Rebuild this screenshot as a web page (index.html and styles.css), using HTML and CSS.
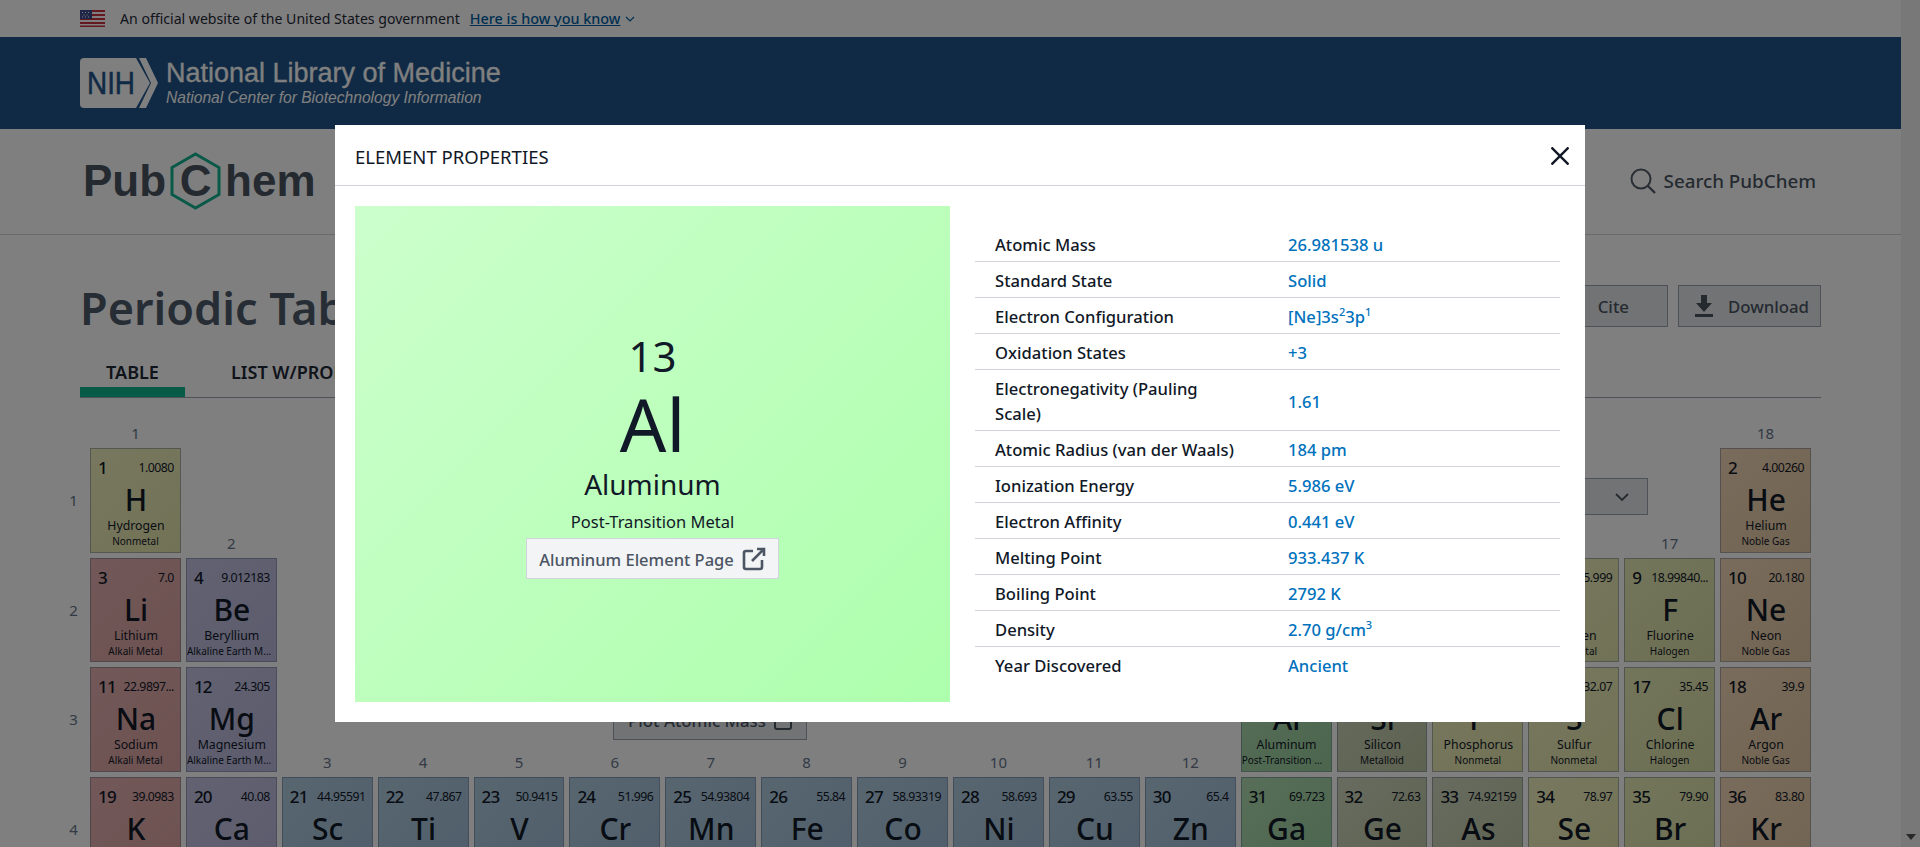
FILE: index.html
```html
<!DOCTYPE html>
<html lang="en">
<head>
    <meta charset="UTF-8">
    <meta name="viewport" content="width=device-width, initial-scale=1.0">
    <title>Periodic Table - PubChem</title>
    <link rel="stylesheet" href="styles.css">
</head>
<body>
    <div class="page">
        <div class="gov-banner">
            <svg class="flag" viewBox="0 0 25 17" width="25" height="17">
                <rect width="25" height="17" fill="#fff"/>
                <path d="M0 0H25V2H0ZM0 4H25V6H0ZM0 8H25V10H0ZM0 12H25V14H0ZM0 15.5H25V17H0Z" fill="#c8313e"/>
                <rect width="12" height="9" fill="#3c4a8c"/>
                <path d="M2 2h1v1H2ZM5 2h1v1H5ZM8 2h1v1H8ZM3.500 4.500h1v1h-1ZM6.500 4.500h1v1h-1ZM2 6.500h1v1H2ZM5 6.500h1v1H5ZM8 6.500h1v1H8Z" fill="#fff"/>
            </svg>
            <span>An official website of the United States government</span>
            <a class="how-link">Here is how you know</a>
            <svg class="how-chevron" viewBox="0 0 10 6" width="10" height="6"><path d="M1 1l4 4 4-4" fill="none" stroke="#005ea2" stroke-width="1.200"/></svg>
        </div>

        <div class="nlm-header">
            <div class="nih-logo">
                <svg viewBox="0 0 78 50" width="78" height="50">
                    <path d="M4 0H56L70 25L56 50H4Q0 50 0 46V4Q0 0 4 0Z" fill="#fff"/>
                    <path d="M59 0H66L78 25L66 50H59L71 25Z" fill="#fff"/>
                    <text class="nih-text" x="7" y="36" textLength="48" lengthAdjust="spacingAndGlyphs">NIH</text>
                </svg>
            </div>
            <div>
                <div class="nlm-title">National Library of Medicine</div>
                <div class="nlm-sub">National Center for Biotechnology Information</div>
            </div>
        </div>

        <div class="site-header">
            <div class="pubchem-logo">
                <span>Pub</span>
                <span class="hex">
                    <svg viewBox="0 0 51 58" width="51" height="58"><path d="M25.500 2L49 15.500V42.500L25.500 56L2 42.500V15.500Z" fill="none" stroke="#10b28e" stroke-width="3"/></svg>
                    <span class="hex-c">C</span>
                </span>
                <span>hem</span>
            </div>
            <div class="search">
                <svg viewBox="0 0 26 26" width="26" height="26"><circle cx="11" cy="11" r="9.500" fill="none" stroke="#555e6b" stroke-width="2"/><path d="M18 18l7 7" stroke="#555e6b" stroke-width="2.400"/></svg>
                <span>Search PubChem</span>
            </div>
        </div>

        <div class="content">
            <div class="title-row">
                <h1>Periodic Table of Elements</h1>
                <div class="actions">
                    <button class="btn btn-cite">
                        <svg viewBox="0 0 20 20" width="20" height="20"><path d="M3 4h5v6c0 3-2 5-4 6M12 4h5v6c0 3-2 5-4 6" fill="none" stroke="#4b5563" stroke-width="2"/></svg>
                        Cite
                    </button>
                    <button class="btn">
                        <svg viewBox="0 0 18 22" width="18" height="22"><path d="M6 0h6v8h5l-8 9-8-9h5ZM0 19h18v3H0Z" fill="#4b5563"/></svg>
                        Download
                    </button>
                </div>
            </div>

            <div class="tabs">
                <div class="tab active">TABLE</div>
                <div class="tab">LIST W/PROPERTIES</div>
                <div class="tab">PROPERTIES</div>
            </div>

            <div class="table-wrap">
                <div class="filter-row">
                    <div class="select">
                        <svg viewBox="0 0 14 8" width="14" height="8"><path d="M1 1l6 6 6-6" fill="none" stroke="#4b5563" stroke-width="1.800"/></svg>
                    </div>
                </div>
                <div class="plot-btn">
                    Plot Atomic Mass
                    <svg viewBox="0 0 18 18" width="18" height="18"><rect x="1" y="1" width="16" height="16" rx="2" fill="none" stroke="#4b5563" stroke-width="2"/></svg>
                </div>

                <div class="ptable">
                    <div class="period">1</div>
                    <div class="cell nonmetal"><span class="group">1</span><div class="top"><span class="num">1</span><span class="mass">1.0080</span></div><div class="sym">H</div><div class="name">Hydrogen</div><div class="cat">Nonmetal</div></div>
                    <div class="skip-16"></div>
                    <div class="cell noble"><span class="group">18</span><div class="top"><span class="num">2</span><span class="mass">4.00260</span></div><div class="sym">He</div><div class="name">Helium</div><div class="cat">Noble Gas</div></div>

                    <div class="period">2</div>
                    <div class="cell alkali"><div class="top"><span class="num">3</span><span class="mass">7.0</span></div><div class="sym">Li</div><div class="name">Lithium</div><div class="cat">Alkali Metal</div></div>
                    <div class="cell earth"><span class="group">2</span><div class="top"><span class="num">4</span><span class="mass">9.012183</span></div><div class="sym">Be</div><div class="name">Beryllium</div><div class="cat">Alkaline Earth Metal</div></div>
                    <div class="skip-10"></div>
                    <div class="cell metalloid"><span class="group">13</span><div class="top"><span class="num">5</span><span class="mass">10.81</span></div><div class="sym">B</div><div class="name">Boron</div><div class="cat">Metalloid</div></div>
                    <div class="cell nonmetal"><span class="group">14</span><div class="top"><span class="num">6</span><span class="mass">12.011</span></div><div class="sym">C</div><div class="name">Carbon</div><div class="cat">Nonmetal</div></div>
                    <div class="cell nonmetal"><span class="group">15</span><div class="top"><span class="num">7</span><span class="mass">14.007</span></div><div class="sym">N</div><div class="name">Nitrogen</div><div class="cat">Nonmetal</div></div>
                    <div class="cell nonmetal"><span class="group">16</span><div class="top"><span class="num">8</span><span class="mass">15.999</span></div><div class="sym">O</div><div class="name">Oxygen</div><div class="cat">Nonmetal</div></div>
                    <div class="cell halogen"><span class="group">17</span><div class="top"><span class="num">9</span><span class="mass">18.99840...</span></div><div class="sym">F</div><div class="name">Fluorine</div><div class="cat">Halogen</div></div>
                    <div class="cell noble"><div class="top"><span class="num">10</span><span class="mass">20.180</span></div><div class="sym">Ne</div><div class="name">Neon</div><div class="cat">Noble Gas</div></div>

                    <div class="period">3</div>
                    <div class="cell alkali"><div class="top"><span class="num">11</span><span class="mass">22.9897...</span></div><div class="sym">Na</div><div class="name">Sodium</div><div class="cat">Alkali Metal</div></div>
                    <div class="cell earth"><div class="top"><span class="num">12</span><span class="mass">24.305</span></div><div class="sym">Mg</div><div class="name">Magnesium</div><div class="cat">Alkaline Earth Metal</div></div>
                    <div class="skip-10"></div>
                    <div class="cell post"><div class="top"><span class="num">13</span><span class="mass">26.9815...</span></div><div class="sym">Al</div><div class="name">Aluminum</div><div class="cat">Post-Transition Metal</div></div>
                    <div class="cell metalloid"><div class="top"><span class="num">14</span><span class="mass">28.085</span></div><div class="sym">Si</div><div class="name">Silicon</div><div class="cat">Metalloid</div></div>
                    <div class="cell nonmetal"><div class="top"><span class="num">15</span><span class="mass">30.9737...</span></div><div class="sym">P</div><div class="name">Phosphorus</div><div class="cat">Nonmetal</div></div>
                    <div class="cell nonmetal"><div class="top"><span class="num">16</span><span class="mass">32.07</span></div><div class="sym">S</div><div class="name">Sulfur</div><div class="cat">Nonmetal</div></div>
                    <div class="cell halogen"><div class="top"><span class="num">17</span><span class="mass">35.45</span></div><div class="sym">Cl</div><div class="name">Chlorine</div><div class="cat">Halogen</div></div>
                    <div class="cell noble"><div class="top"><span class="num">18</span><span class="mass">39.9</span></div><div class="sym">Ar</div><div class="name">Argon</div><div class="cat">Noble Gas</div></div>

                    <div class="period">4</div>
                    <div class="cell alkali"><div class="top"><span class="num">19</span><span class="mass">39.0983</span></div><div class="sym">K</div><div class="name">Potassium</div><div class="cat">Alkali Metal</div></div>
                    <div class="cell earth"><div class="top"><span class="num">20</span><span class="mass">40.08</span></div><div class="sym">Ca</div><div class="name">Calcium</div><div class="cat">Alkaline Earth Metal</div></div>
                    <div class="cell transition"><span class="group">3</span><div class="top"><span class="num">21</span><span class="mass">44.95591</span></div><div class="sym">Sc</div><div class="name">Scandium</div><div class="cat">Transition Metal</div></div>
                    <div class="cell transition"><span class="group">4</span><div class="top"><span class="num">22</span><span class="mass">47.867</span></div><div class="sym">Ti</div><div class="name">Titanium</div><div class="cat">Transition Metal</div></div>
                    <div class="cell transition"><span class="group">5</span><div class="top"><span class="num">23</span><span class="mass">50.9415</span></div><div class="sym">V</div><div class="name">Vanadium</div><div class="cat">Transition Metal</div></div>
                    <div class="cell transition"><span class="group">6</span><div class="top"><span class="num">24</span><span class="mass">51.996</span></div><div class="sym">Cr</div><div class="name">Chromium</div><div class="cat">Transition Metal</div></div>
                    <div class="cell transition"><span class="group">7</span><div class="top"><span class="num">25</span><span class="mass">54.93804</span></div><div class="sym">Mn</div><div class="name">Manganese</div><div class="cat">Transition Metal</div></div>
                    <div class="cell transition"><span class="group">8</span><div class="top"><span class="num">26</span><span class="mass">55.84</span></div><div class="sym">Fe</div><div class="name">Iron</div><div class="cat">Transition Metal</div></div>
                    <div class="cell transition"><span class="group">9</span><div class="top"><span class="num">27</span><span class="mass">58.93319</span></div><div class="sym">Co</div><div class="name">Cobalt</div><div class="cat">Transition Metal</div></div>
                    <div class="cell transition"><span class="group">10</span><div class="top"><span class="num">28</span><span class="mass">58.693</span></div><div class="sym">Ni</div><div class="name">Nickel</div><div class="cat">Transition Metal</div></div>
                    <div class="cell transition"><span class="group">11</span><div class="top"><span class="num">29</span><span class="mass">63.55</span></div><div class="sym">Cu</div><div class="name">Copper</div><div class="cat">Transition Metal</div></div>
                    <div class="cell transition"><span class="group">12</span><div class="top"><span class="num">30</span><span class="mass">65.4</span></div><div class="sym">Zn</div><div class="name">Zinc</div><div class="cat">Transition Metal</div></div>
                    <div class="cell post"><div class="top"><span class="num">31</span><span class="mass">69.723</span></div><div class="sym">Ga</div><div class="name">Gallium</div><div class="cat">Post-Transition Metal</div></div>
                    <div class="cell metalloid"><div class="top"><span class="num">32</span><span class="mass">72.63</span></div><div class="sym">Ge</div><div class="name">Germanium</div><div class="cat">Metalloid</div></div>
                    <div class="cell metalloid"><div class="top"><span class="num">33</span><span class="mass">74.92159</span></div><div class="sym">As</div><div class="name">Arsenic</div><div class="cat">Metalloid</div></div>
                    <div class="cell nonmetal"><div class="top"><span class="num">34</span><span class="mass">78.97</span></div><div class="sym">Se</div><div class="name">Selenium</div><div class="cat">Nonmetal</div></div>
                    <div class="cell halogen"><div class="top"><span class="num">35</span><span class="mass">79.90</span></div><div class="sym">Br</div><div class="name">Bromine</div><div class="cat">Halogen</div></div>
                    <div class="cell noble"><div class="top"><span class="num">36</span><span class="mass">83.80</span></div><div class="sym">Kr</div><div class="name">Krypton</div><div class="cat">Noble Gas</div></div>
                </div>
            </div>
        </div>
    </div>

    <div class="scrollbar">
        <svg viewBox="0 0 10 6" width="10" height="6"><path d="M0 0h10L5 6Z" fill="#505050"/></svg>
    </div>

    <!-- Dimmed backdrop + element dialog -->
    <div class="overlay">
        <div class="modal">
            <div class="modal-header">
                <span>ELEMENT PROPERTIES</span>
                <svg class="close" viewBox="0 0 18 18" width="18" height="18"><path d="M0.500 0.500l17 17M17.500 0.500l-17 17" stroke="#111827" stroke-width="2.400"/></svg>
            </div>
            <div class="modal-body">
                <div class="element-card">
                    <div class="el-num">13</div>
                    <div class="el-sym">Al</div>
                    <div class="el-name">Aluminum</div>
                    <div class="el-cat">Post-Transition Metal</div>
                    <a class="el-link">
                        Aluminum Element Page
                        <svg viewBox="0 0 24 24" width="24" height="24"><path d="M11 4H4a2 2 0 0 0-2 2v14a2 2 0 0 0 2 2h14a2 2 0 0 0 2-2v-7M10 14L22 2M15 2h7v7" fill="none" stroke="#4b5563" stroke-width="2.600"/></svg>
                    </a>
                </div>
                <table class="props">
                    <tr><td>Atomic Mass</td><td>26.981538 u</td></tr>
                    <tr><td>Standard State</td><td>Solid</td></tr>
                    <tr><td>Electron Configuration</td><td>[Ne]3s<sup>2</sup>3p<sup>1</sup></td></tr>
                    <tr><td>Oxidation States</td><td>+3</td></tr>
                    <tr><td>Electronegativity (Pauling Scale)</td><td>1.61</td></tr>
                    <tr><td>Atomic Radius (van der Waals)</td><td>184 pm</td></tr>
                    <tr><td>Ionization Energy</td><td>5.986 eV</td></tr>
                    <tr><td>Electron Affinity</td><td>0.441 eV</td></tr>
                    <tr><td>Melting Point</td><td>933.437 K</td></tr>
                    <tr><td>Boiling Point</td><td>2792 K</td></tr>
                    <tr><td>Density</td><td>2.70 g/cm<sup>3</sup></td></tr>
                    <tr><td>Year Discovered</td><td>Ancient</td></tr>
                </table>
            </div>
        </div>
    </div>
</body>
</html>
```

FILE: styles.css
```css
* {
    box-sizing: border-box;
}
html, body {
    height: 847px;
    margin: 0;
    overflow: hidden;
}
body {
    font-family: "Noto Sans", sans-serif;
    color: #1f2937;
    background-color: #fff;
    display: flex;
}
.page {
    flex: 1;
    min-width: 0;
}
.scrollbar {
    width: 19px;
    background-color: #f1f1f1;
    display: flex;
    flex-direction: column;
    justify-content: flex-end;
    align-items: center;
    padding-bottom: 7px;
}

/* top bars */
.gov-banner {
    height: 37px;
    padding-left: 80px;
    display: flex;
    align-items: center;
    font-size: 14.100px;
    background-color: #fff;
}
.flag {
    margin-right: 15px;
}
.how-link {
    margin-left: 10px;
    font-size: 14.400px;
    font-weight: 500;
    color: #005ea2;
    text-decoration: underline;
}
.how-chevron {
    margin-left: 5px;
}
.nlm-header {
    height: 92px;
    padding-left: 80px;
    display: flex;
    align-items: center;
    gap: 8px;
    background-color: #20558a;
    color: #fff;
    font-family: "Liberation Sans", sans-serif;
}
.nih-logo svg {
    display: block;
}
.nih-text {
    font-family: "Liberation Sans", sans-serif;
    font-size: 31px;
    fill: #20558a;
    stroke: #20558a;
    stroke-width: 0.500px;
}
.nlm-title {
    font-size: 27px;
    line-height: 30px;
    -webkit-text-stroke: 0.300px #fff;
}
.nlm-sub {
    font-size: 15.600px;
    font-style: italic;
    line-height: 20px;
}
.site-header {
    height: 106px;
    padding: 0 85px 2px 83px;
    display: flex;
    justify-content: space-between;
    align-items: center;
    border-bottom: 1px solid #d1d5db;
}
.pubchem-logo {
    display: flex;
    align-items: center;
    gap: 4px;
    font-family: "Liberation Sans", sans-serif;
    font-weight: bold;
    font-size: 44px;
    color: #4b5563;
}
.hex {
    position: relative;
    width: 51px;
    height: 58px;
    display: flex;
    justify-content: center;
    align-items: center;
}
.hex svg {
    position: absolute;
    top: 0;
    left: 0;
}
.search {
    display: flex;
    align-items: center;
    gap: 8px;
    font-size: 18.800px;
    font-weight: 500;
    color: #4b5563;
}

/* page body */
.content {
    padding: 0 80px;
}
.title-row {
    height: 118px;
    padding-top: 42px;
    display: flex;
    justify-content: space-between;
}
.title-row h1 {
    margin: 0;
    font-size: 45px;
    font-weight: 600;
    line-height: 62px;
    color: #4f5b6b;
}
.actions {
    margin-top: 8px;
    display: flex;
    gap: 10px;
    height: 42px;
}
.btn {
    display: flex;
    align-items: center;
    gap: 15px;
    padding: 0 11px 0 16px;
    font-family: inherit;
    font-size: 16.800px;
    font-weight: 500;
    color: #4b5563;
    background-color: #e5e7eb;
    border: 1px solid #9ca3af;
}
.btn-cite {
    gap: 11px;
    padding-right: 38px;
}
.tabs {
    height: 45px;
    display: flex;
    border-bottom: 1px solid #9ca3af;
}
.tab {
    padding: 0 22px;
    height: 44px;
    line-height: 38px;
    font-size: 18px;
    font-weight: 600;
    color: #1f2937;
}
.tab.active {
    width: 105px;
    padding: 0;
    text-align: center;
    border-bottom: 10px solid #10b68e;
    margin-right: 24px;
}
.table-wrap {
    position: relative;
    padding-top: 50px;
}

/* these sit over the empty middle of the table */
.filter-row {
    position: absolute;
    top: 80px;
    right: 173px;
}
.select {
    width: 400px;
    height: 37px;
    padding-right: 18px;
    display: flex;
    justify-content: flex-end;
    align-items: center;
    background-color: #e5e7eb;
    border: 1px solid #9ca3af;
}
.plot-btn {
    position: absolute;
    top: 305px;
    left: 533px;
    width: 194px;
    height: 37px;
    padding-bottom: 2px;
    display: flex;
    justify-content: center;
    align-items: center;
    gap: 8px;
    font-size: 16.800px;
    font-weight: 500;
    color: #4b5563;
    background-color: #e5e7eb;
    border: 1px solid #9ca3af;
}

/* periodic table */
.ptable {
    margin: 0 10px 0 -18px;
    display: grid;
    grid-template-columns: 23px repeat(18, minmax(0, 1fr));
    grid-auto-rows: 104.500px;
    gap: 5px;
}
.skip-16 {
    grid-column: span 16;
}
.skip-10 {
    grid-column: span 10;
}
.period {
    align-self: center;
    text-align: center;
    font-size: 15px;
    color: #64748b;
}
.cell {
    position: relative;
    padding: 0 6px 0 7px;
    text-align: center;
    border: 1px solid rgba(100, 116, 139, 0.5);
}
.group {
    position: absolute;
    left: 0;
    right: 0;
    top: -26px;
    font-size: 15px;
    color: #64748b;
}
.top {
    height: 33px;
    padding-top: 4px;
    display: flex;
    justify-content: space-between;
    align-items: center;
}
.num {
    font-size: 17px;
    font-weight: 500;
    letter-spacing: -0.800px;
    color: #111827;
}
.mass {
    font-size: 12.300px;
    letter-spacing: -0.500px;
    color: #111827;
}
.sym {
    font-size: 30px;
    font-weight: 500;
    line-height: 36px;
    color: #111827;
}
.name {
    font-size: 12.300px;
    line-height: 16px;
    height: 15px;
    overflow: hidden;
    color: #111827;
}
.cat {
    margin: 1px -6px 0 -7px;
    font-size: 10px;
    line-height: 14px;
    color: #111827;
    white-space: nowrap;
    overflow: hidden;
    text-overflow: ellipsis;
}
.nonmetal {
    background-image: linear-gradient(135deg, #f0f0c0, #e4e4ac);
}
.noble {
    background-image: linear-gradient(135deg, #f4d8b8, #e4c8a4);
}
.alkali {
    background-image: linear-gradient(135deg, #e4b0b0, #dca4a4);
}
.earth {
    background-image: linear-gradient(135deg, #c4c4e4, #b8b8dc);
}
.metalloid {
    background-image: linear-gradient(135deg, #d0d8c0, #bcc4a0);
}
.halogen {
    background-image: linear-gradient(135deg, #e8ecb8, #d8dca4);
}
.post {
    background-image: linear-gradient(135deg, #b0dcb0, #98cc9c);
}
.transition {
    background-image: linear-gradient(135deg, #b0cce0, #a0bcd8);
}

/* dialog */
.overlay {
    position: fixed;
    top: 0;
    left: 0;
    width: 1920px;
    height: 847px;
    display: flex;
    justify-content: center;
    align-items: center;
    background-color: rgba(0, 0, 0, 0.5);
}
.modal {
    width: 1250px;
    background-color: #fff;
    color: #111827;
}
.modal-header {
    height: 61px;
    padding: 2px 16px 0 20px;
    display: flex;
    justify-content: space-between;
    align-items: center;
    font-size: 18.500px;
    border-bottom: 1px solid #d1d5db;
}
.modal-body {
    padding: 20px;
    display: grid;
    grid-template-columns: 1fr 1fr;
    gap: 20px;
    align-items: center;
}
.element-card {
    height: 496px;
    display: flex;
    flex-direction: column;
    justify-content: center;
    align-items: center;
    text-align: center;
    background-image: linear-gradient(135deg, #ccffcc, #adffad);
}
.el-num {
    font-size: 42px;
    line-height: 54px;
}
.el-sym {
    font-size: 73px;
    line-height: 82px;
}
.el-name {
    font-size: 28px;
    line-height: 38px;
}
.el-cat {
    margin-top: 3px;
    font-size: 16.500px;
    line-height: 32px;
}
.el-link {
    width: 253px;
    height: 41px;
    padding-top: 2px;
    display: flex;
    justify-content: center;
    align-items: center;
    gap: 8px;
    font-size: 16.500px;
    font-weight: 500;
    color: #4b5563;
    background-color: #f3f4f6;
    border: 1px solid #d1d5db;
}
.el-link svg {
    margin-top: -2px;
}
.props {
    margin: 0 5px;
    width: 585px;
    border-collapse: collapse;
    font-size: 16.600px;
    font-weight: 500;
}
.props tr {
    border-bottom: 1px solid #d1d5db;
}
.props tr:last-child {
    border-bottom: none;
}
.props td {
    padding: 6px 20px 4px;
    line-height: 25px;
}
.props td:first-child {
    width: 293px;
    padding-right: 34px;
}
.props td:last-child {
    color: #0071bc;
}
.props sup {
    font-size: 11px;
    line-height: 0;
}
```
